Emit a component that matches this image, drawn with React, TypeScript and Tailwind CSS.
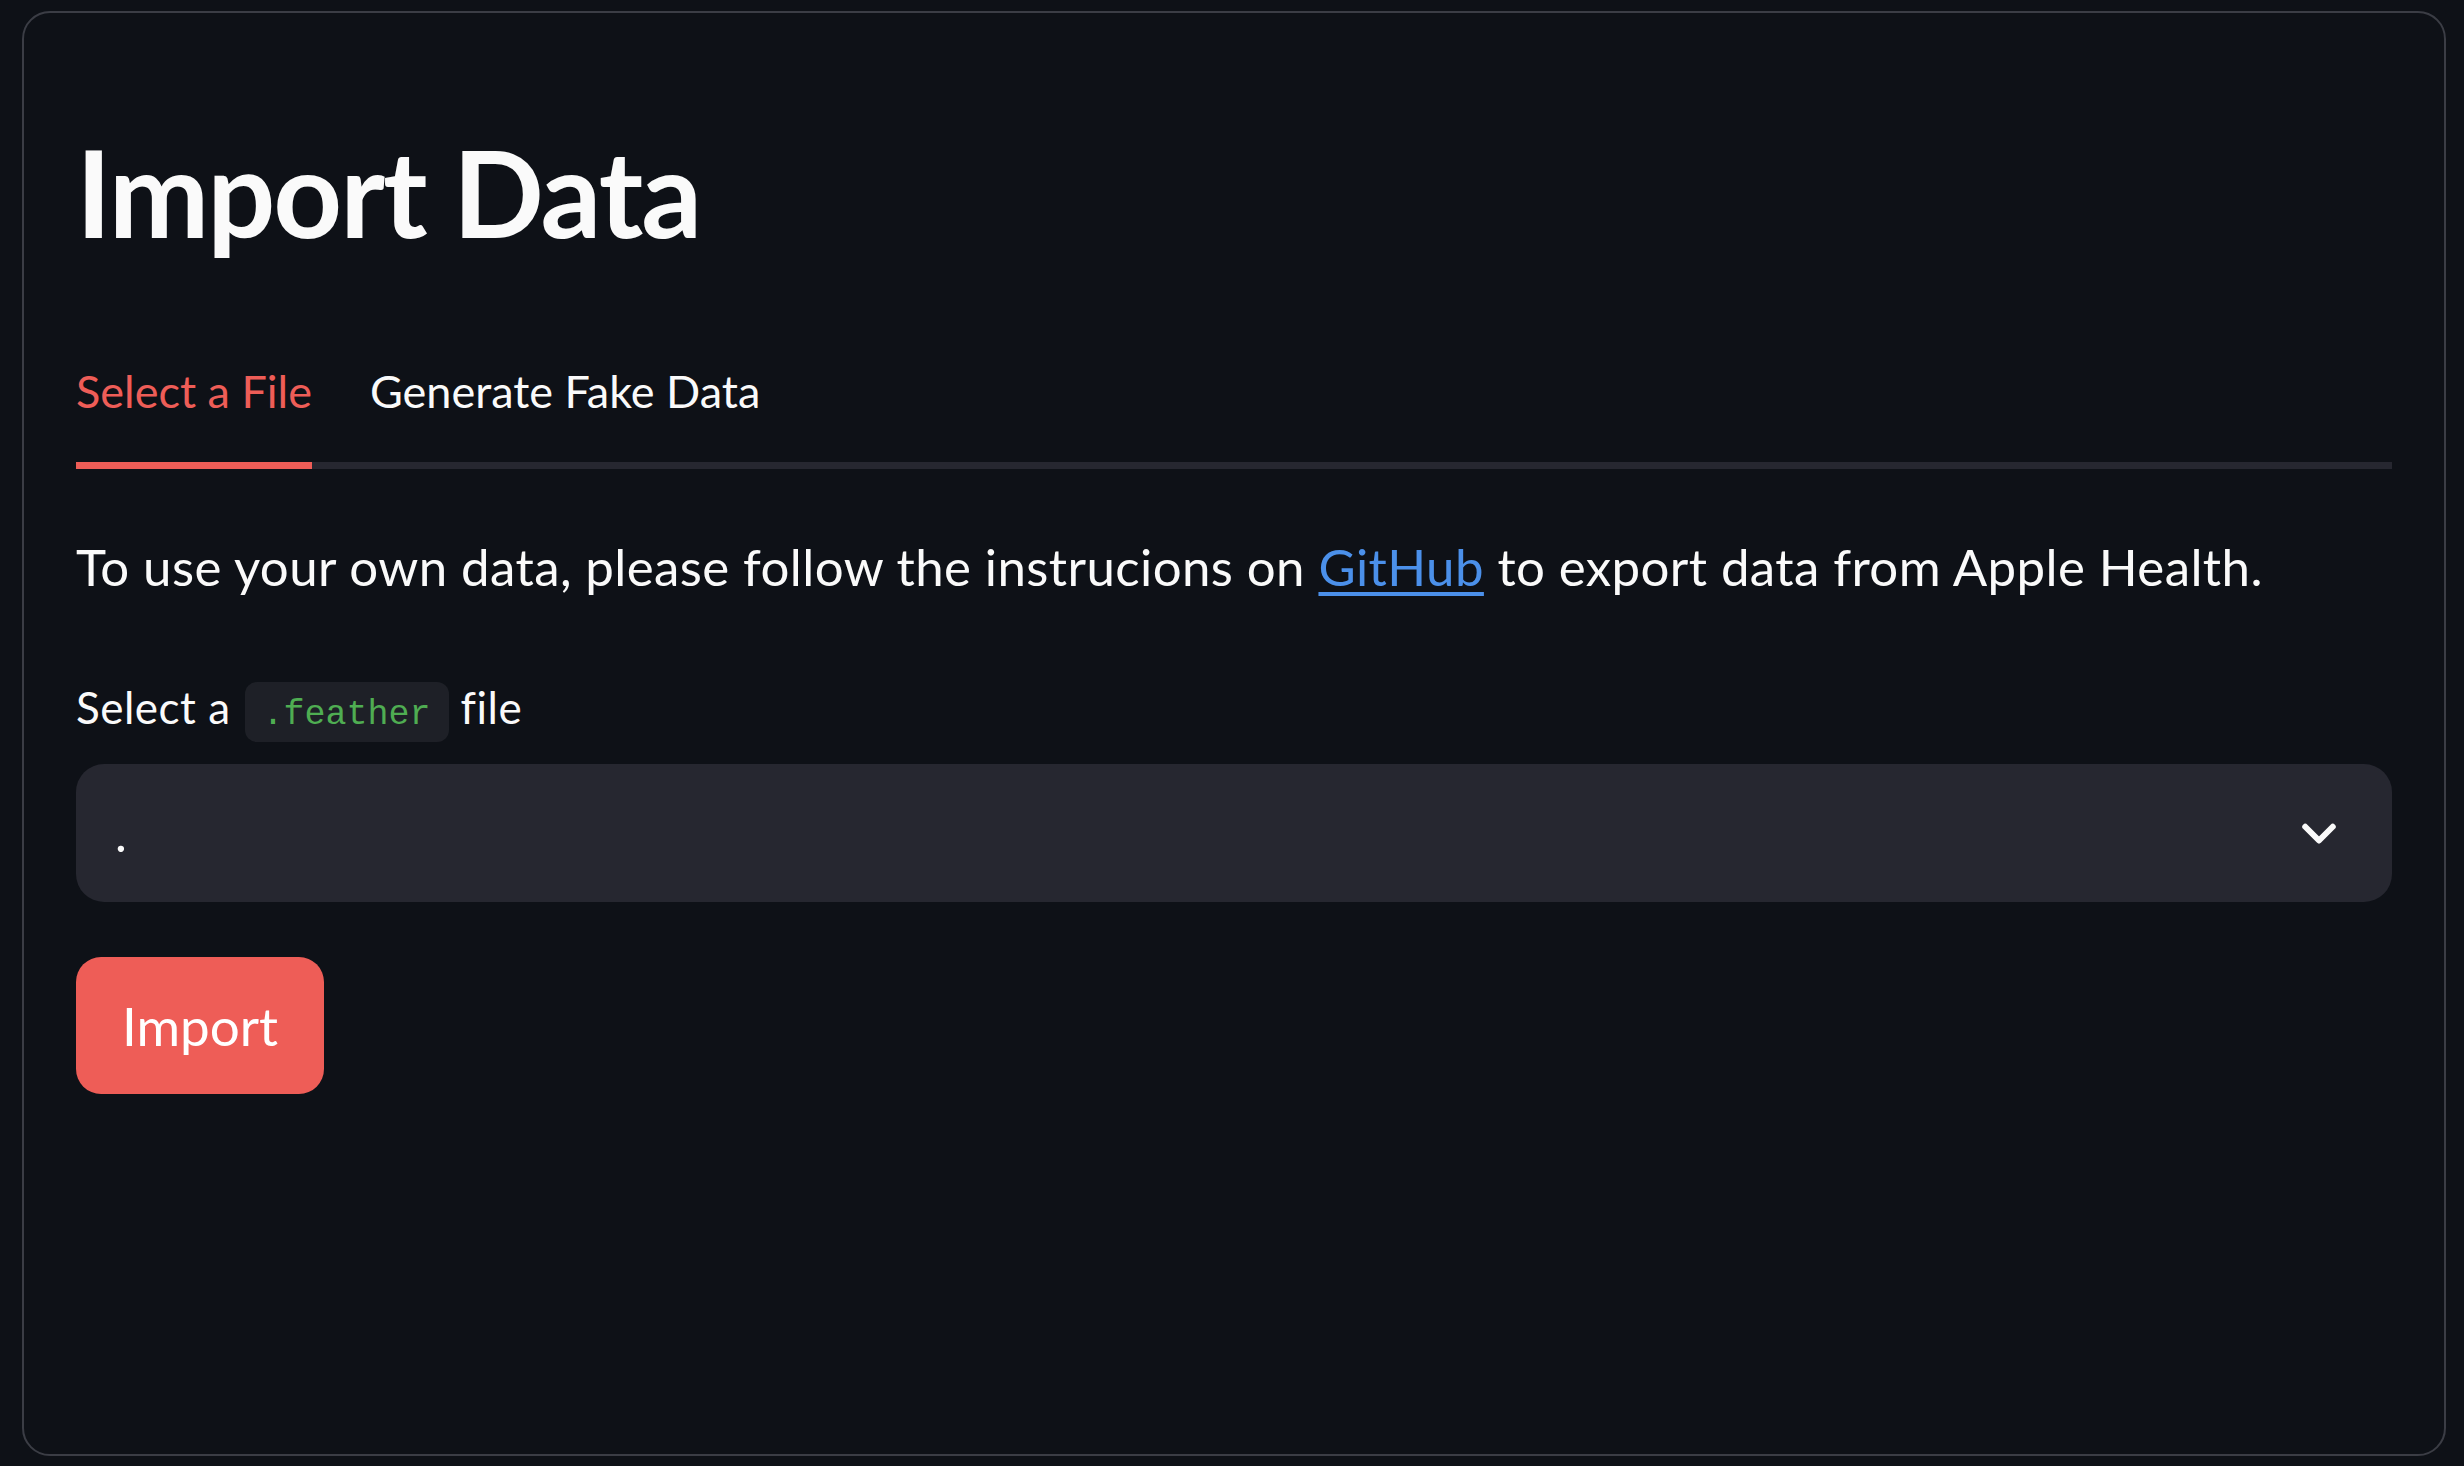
import { useState } from "react"

export default function App() {
  const [tab, setTab] = useState(0)

  return (
    <div className="min-h-screen w-full bg-[#0e1117] pt-[11px] pl-[22px] font-['Lato',sans-serif] text-[#fafafa]">
      <div className="w-[2424px] h-[1445px] rounded-[28px] border-2 border-[#3b3d45] px-[52px] pt-[105px]">
        <h1 className="text-[120px] leading-[148px] font-bold tracking-[-2px]">Import Data</h1>

        {/* tabs */}
        <div className="mt-[95px] flex">
          <button
            onClick={() => setTab(0)}
            className={"flex flex-col border-b-[7px] pb-[41px] " + (tab === 0 ? "border-[#ee5d57] text-[#ee5d57]" : "border-[#262730]")}
          >
            <span className="text-[45px] leading-[60px] whitespace-nowrap">Select a File</span>
          </button>
          <button
            onClick={() => setTab(1)}
            className="flex flex-col border-b-[7px] border-[#262730] pb-[41px] pl-[58px]"
          >
            <span className={"text-[45px] leading-[60px] whitespace-nowrap " + (tab === 1 ? "text-[#ee5d57]" : "")}>
              Generate Fake Data
            </span>
          </button>
          <div className="flex-1 border-b-[7px] border-[#262730]"></div>
        </div>

        <p className="mt-[68px] text-[51px] leading-[60px] tracking-[0.4px] whitespace-nowrap">
          To use your own data, please follow the instrucions on{" "}
          <a href="#" className="text-[#4b90ea] underline decoration-[4px] underline-offset-[6px]">GitHub</a>{" "}
          to export data from Apple Health.
        </p>

        <div className="mt-[85px] flex items-start">
          <span className="text-[44px] leading-[51px] tracking-[0.5px] whitespace-nowrap">Select a</span>
          <code className="ml-[14px] mr-[12px] h-[60px] overflow-hidden rounded-[12px] bg-[#1e2027] px-[18px] font-['Liberation_Mono',monospace] text-[35px] leading-[66px] text-[#4fad52]">
            .feather
          </code>
          <span className="text-[44px] leading-[51px] tracking-[0.5px]">file</span>
        </div>

        <div className="mt-[22px] flex h-[138px] items-center justify-between rounded-[28px] bg-[#262730] pl-[39px] pr-[43px]">
          <span className="text-[50px] leading-[60px]">.</span>
          <svg width="60" height="60" viewBox="0 0 24 24" fill="none" stroke="#fafafa" strokeWidth="2.4" strokeLinecap="round" strokeLinejoin="round">
            <path d="M6.5 9.5 L12 15 L17.5 9.5" />
          </svg>
        </div>

        <button className="mt-[55px] flex h-[137px] w-[248px] items-center justify-center rounded-[25px] bg-[#ee5d57] text-[53px] text-white">
          Import
        </button>
      </div>
    </div>
  )
}
